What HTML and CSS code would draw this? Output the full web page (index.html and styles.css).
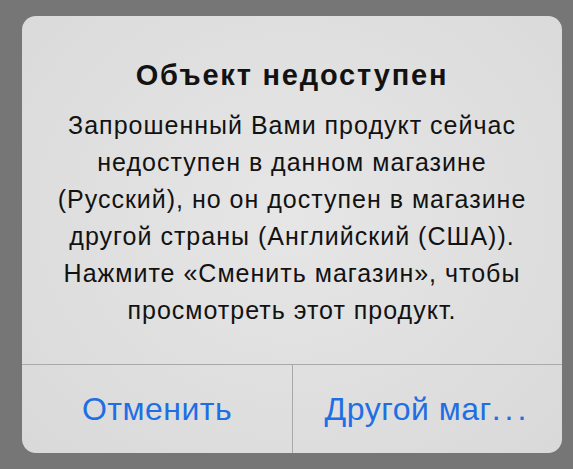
FILE: index.html
```html
<!DOCTYPE html>
<html lang="ru">
<head>
<meta charset="utf-8">
<title>Объект недоступен</title>
<link rel="stylesheet" href="styles.css">
</head>
<body>
<div class="alert">
  <div class="alert-content">
    <h1 class="alert-title">Объект недоступен</h1>
    <p class="alert-message">Запрошенный Вами продукт сейчас<br>недоступен в данном магазине<br>(Русский), но он доступен в магазине<br>другой страны (Английский (США)).<br>Нажмите «Сменить магазин», чтобы<br>просмотреть этот продукт.</p>
  </div>
  <div class="alert-actions">
    <button class="alert-button">Отменить</button>
    <button class="alert-button">Другой маг<span class="ellipsis">...</span></button>
  </div>
</div>
</body>
</html>
```
FILE: styles.css
```css
html, body {
  margin: 0;
  padding: 0;
  background: #767676;
  height: 100%;
}

body {
  font-family: "Liberation Sans", Arial, sans-serif;
  padding: 16px 11px 16px 22px;
  box-sizing: border-box;
  overflow: hidden;
}

.alert {
  width: 540px;
  height: 437px;
  border-radius: 14px;
  background: radial-gradient(ellipse at 50% 45%, #e6e6e6 0%, #dfdfdf 55%, #d9d9d9 100%);
  display: flex;
  flex-direction: column;
  overflow: hidden;
}

.alert-content {
  height: 348px;
  padding-top: 41px;
  box-sizing: border-box;
  text-align: center;
  color: #121212;
}

.alert-title {
  margin: 0;
  font-size: 29px;
  line-height: 36px;
  font-weight: bold;
  letter-spacing: 1.8px;
}

.alert-message {
  margin: 14px 0 0;
  font-size: 25px;
  line-height: 37px;
  letter-spacing: 1px;
}

.alert-actions {
  flex: 1;
  display: grid;
  grid-template-columns: 270px 1fr;
  border-top: 1px solid #a9a9a9;
}

.alert-button {
  background: none;
  border: 0;
  padding: 0;
  margin: 0;
  font-family: inherit;
  font-size: 32px;
  letter-spacing: 0.5px;
  color: #1f6ee4;
  text-align: center;
}

.alert-button + .alert-button {
  border-left: 1px solid #a9a9a9;
}

.ellipsis {
  letter-spacing: 4px;
}
```
